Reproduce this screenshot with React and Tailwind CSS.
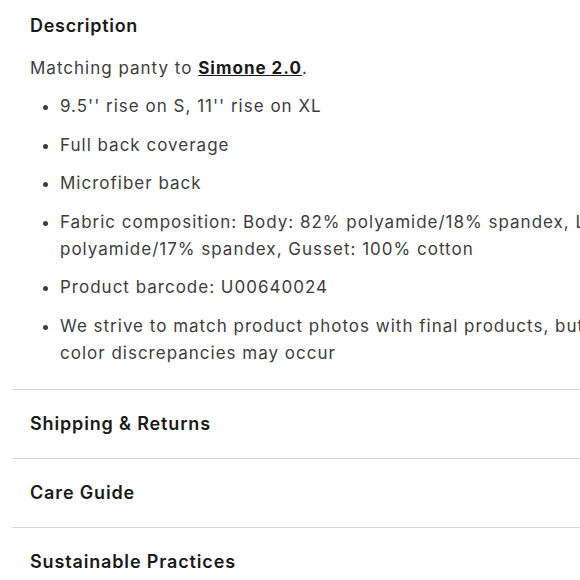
export default function App() {
  const items = [
    ["9.5'' rise on S, 11'' rise on XL"],
    ["Full back coverage"],
    ["Microfiber back"],
    ["Fabric composition: Body: 82% polyamide/18% spandex, Lace: 83%", "polyamide/17% spandex, Gusset: 100% cotton"],
    ["Product barcode: U00640024"],
    ["We strive to match product photos with final products, but slight", "color discrepancies may occur"],
  ];
  return (
    <div className="w-[580px] h-[580px] overflow-hidden bg-white" style={{ fontFamily: "Inter, 'Open Sans', sans-serif" }}>
      <div className="ml-[12px] w-[800px]">
        <div className="px-[18px] pt-[14px] pb-[22px]">
          <h2 className="text-[18px] leading-[24px] font-semibold text-[#1a1a1a] tracking-[0.7px]">Description</h2>
          <p className="mt-[17px] text-[17px] leading-[27px] text-[#3d3d3d] tracking-[1px]">
            Matching panty to <a className="font-bold underline text-[#1a1a1a]">Simone 2.0</a>.
          </p>
          <ul className="mt-[11px] list-disc pl-[30px] text-[17px] leading-[27px] text-[#3d3d3d] tracking-[1px] flex flex-col gap-[11.5px]">
            {items.map((t) => (
              <li key={t[0]}>
                {t.map((line, i) => (
                  <span key={i}>
                    {i > 0 && <br />}
                    {line}
                  </span>
                ))}
              </li>
            ))}
          </ul>
        </div>
        {["Shipping & Returns", "Care Guide", "Sustainable Practices"].map((h) => (
          <div key={h} className="border-t border-[#d6d6d6] h-[69px] flex items-center px-[18px]">
            <span className="text-[18px] font-semibold text-[#1a1a1a] tracking-[0.85px]">{h}</span>
          </div>
        ))}
      </div>
    </div>
  );
}
